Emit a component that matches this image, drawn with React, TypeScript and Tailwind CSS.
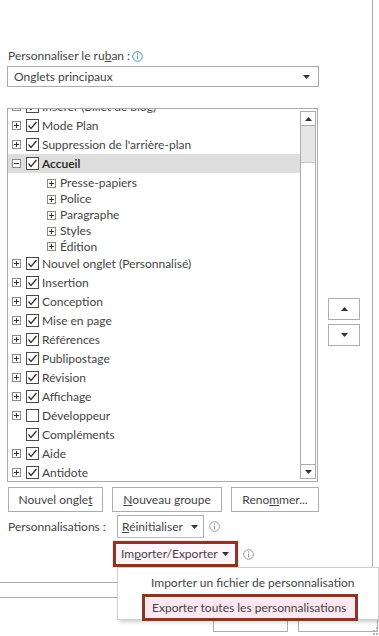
import React from 'react';

const font = { fontFamily: 'Lato, "Noto Sans", sans-serif' };

const Expander = ({ open = false }: { open?: boolean }) => (
    <svg width="9" height="9" viewBox="0 0 9 9" className="shrink-0">
        <rect x="0.5" y="0.5" width="8" height="8" fill="white" stroke="#8a8a8a" />
        <line x1="2" y1="4.5" x2="7" y2="4.5" stroke="#333" />
        {!open && <line x1="4.5" y1="2" x2="4.5" y2="7" stroke="#333" />}
    </svg>
);

const Check = ({ checked = true }: { checked?: boolean }) => (
    <svg width="13" height="13" viewBox="0 0 13 13" className="shrink-0">
        <rect x="0.5" y="0.5" width="12" height="12" fill="white" stroke="#4a4a4a" />
        {checked && <path d="M2.5 6.5 L5 9.5 L10.5 3" fill="none" stroke="#333" strokeWidth="1.3" />}
    </svg>
);

const Info = ({ blue = false }: { blue?: boolean }) => (
    <svg width="11" height="11" viewBox="0 0 11 11" className="shrink-0">
        <circle cx="5.5" cy="5.5" r="4.8" fill="none" stroke={blue ? '#4a8ad6' : '#9a9a9a'} />
        <line x1="5.5" y1="4.5" x2="5.5" y2="8.3" stroke={blue ? '#4a8ad6' : '#9a9a9a'} />
        <circle cx="5.5" cy="3" r="0.7" fill={blue ? '#4a8ad6' : '#9a9a9a'} />
    </svg>
);

const Caret = ({ up = false }: { up?: boolean }) => (
    <svg width="7" height="4" viewBox="0 0 7 4" className="shrink-0">
        <path d={up ? 'M0 4 L3.5 0 L7 4 Z' : 'M0 0 L7 0 L3.5 4 Z'} fill="#333" />
    </svg>
);

type Tab = { label: string; expander?: boolean; checked?: boolean };

const beforeTabs: Tab[] = [
    { label: 'Insérer (Billet de blog)' },
    { label: 'Mode Plan' },
    { label: "Suppression de l'arrière-plan" },
];

const groups = ['Presse-papiers', 'Police', 'Paragraphe', 'Styles', 'Édition'];

const afterTabs: Tab[] = [
    { label: 'Nouvel onglet (Personnalisé)' },
    { label: 'Insertion' },
    { label: 'Conception' },
    { label: 'Mise en page' },
    { label: 'Références' },
    { label: 'Publipostage' },
    { label: 'Révision' },
    { label: 'Affichage' },
    { label: 'Développeur', checked: false },
    { label: 'Compléments', expander: false },
    { label: 'Aide' },
    { label: 'Antidote' },
];

const TabRow = ({ tab }: { tab: Tab }) => (
    <div className="h-[19px] flex items-center pl-[4px]">
        <div className="w-[9px]">{tab.expander !== false && <Expander />}</div>
        <div className="ml-[5px]"><Check checked={tab.checked !== false} /></div>
        <span className="ml-[3px] whitespace-nowrap">{tab.label}</span>
    </div>
);

const Btn = ({ children, className = '' }: { children: React.ReactNode; className?: string }) => (
    <div className={`h-[25px] border border-[#adadad] bg-white flex items-center justify-center ${className}`}>
        {children}
    </div>
);

export default function App() {
    return (
        <div className="w-[379px] h-[636px] bg-white overflow-hidden relative text-[12px] text-[#444]" style={font}>
            <div className="w-[373px] h-[576px] border-r border-[#ababab] pl-[7px] pt-[48px]">
                <div className="h-[16px] flex items-center gap-[2px] pl-[1px]">
                    <span>Personnaliser le ru<u>b</u>an :</span>
                    <Info blue />
                </div>

                <div className="mt-[2px] w-[312px] h-[21px] border border-[#ababab] flex items-center justify-between pl-[6px] pr-[8px]">
                    <span>Onglets principaux</span>
                    <Caret />
                </div>

                <div className="mt-[21px] flex">
                    <div className="w-[311px] h-[374px] border border-[#ababab] flex">
                        <div className="flex-1 overflow-hidden">
                            <div className="-mt-[12px]">
                                {beforeTabs.map((t) => <TabRow key={t.label} tab={t} />)}
                                <div className="h-[19px] flex items-center pl-[4px] bg-[#dedede] text-[#222] font-semibold">
                                    <Expander open />
                                    <div className="ml-[5px]"><Check /></div>
                                    <span className="ml-[3px]">Accueil</span>
                                </div>
                                <div className="pt-[2px]">
                                    {groups.map((g, i) => (
                                        <div key={g} className={`${i === groups.length - 1 ? 'h-[15px]' : 'h-[16px]'} flex items-center pl-[39px]`}>
                                            <Expander />
                                            <span className="ml-[4px]">{g}</span>
                                        </div>
                                    ))}
                                </div>
                                {afterTabs.map((t) => <TabRow key={t.label} tab={t} />)}
                            </div>
                        </div>
                        <div className="w-[16px] my-[2px] mr-[1px] border border-[#ababab] flex flex-col">
                            <div className="h-[14px] border-b border-[#ababab] flex items-center justify-center"><Caret up /></div>
                            <div className="h-[37px] bg-[#e6e6e6] border-b border-[#c8c8c8]" />
                            <div className="flex-1" />
                            <div className="h-[14px] border-t border-[#ababab] flex items-center justify-center"><Caret /></div>
                        </div>
                    </div>
                    <div className="ml-[10px] pt-[190px] flex flex-col gap-[4px]">
                        <div className="w-[32px] h-[22px] border border-[#adadad] flex items-center justify-center"><Caret up /></div>
                        <div className="w-[32px] h-[22px] border border-[#adadad] flex items-center justify-center"><Caret /></div>
                    </div>
                </div>

                <div className="mt-[5px] flex pl-[1px] gap-[9px]">
                    <Btn className="w-[95px]">Nouvel ongle<u>t</u></Btn>
                    <Btn className="w-[110px]"><u>N</u>ouveau groupe</Btn>
                    <Btn className="w-[88px]">Reno<u>m</u>mer...</Btn>
                </div>

                <div className="mt-[3px] h-[23px] flex items-center pl-[1px]">
                    <span className="w-[109px]">Personnalisations :</span>
                    <div className="w-[87px] h-[23px] border border-[#adadad] border-b-[#e9a6c2] flex items-center justify-between pl-[4px] pr-[5px]">
                        <span><u>R</u>éinitialiser</span>
                        <Caret />
                    </div>
                    <div className="ml-[5px]"><Info /></div>
                </div>

                <div className="mt-[2px] flex items-center pl-[105px]">
                    <div className="p-[1px] bg-[#fbe1ee]">
                        <div className="w-[125px] h-[26px] border-[3px] border-[#8b3526] bg-[#fff5fa] flex items-center justify-between pl-[5px] pr-[6px]">
                            <span>Im<u>p</u>orter/Exporter</span>
                            <Caret />
                        </div>
                    </div>
                    <div className="ml-[4px]"><Info /></div>
                </div>
            </div>

            <div className="mt-[6px] border-t border-[#ababab]" />
            <div className="mt-[14px] border-t border-[#ababab]" />
            <div className="mt-[10px] flex pl-[213px] gap-[10px]">
                <div className="w-[75px] h-[24px] border border-[#adadad]" />
                <div className="w-[80px] h-[24px] border border-[#adadad]" />
            </div>

            <div className="absolute left-[117px] top-[567px] w-[262px] h-[53px] bg-white border border-[#cfcfcf] shadow-[2px_2px_4px_rgba(0,0,0,0.2)] pt-[6px]">
                <div className="h-[18px] flex items-center pl-[33px] whitespace-nowrap">Importer un fichier de personnalisation</div>
                <div className="mt-[2px] ml-[24px] w-[216px] h-[27px] border-[3px] border-[#8b3526] bg-[#fde8f2] flex items-center pl-[7px] whitespace-nowrap">
                    Exporter toutes les personnalisations
                </div>
            </div>

            <div className="absolute right-[1px] bottom-[1px] grid grid-cols-3 gap-[1px]">
                {[0, 1, 2, 3, 4, 5, 6, 7, 8].map((i) => (
                    <div key={i} className={`w-[2px] h-[2px] ${i === 2 || i >= 4 && i !== 6 ? 'bg-[#b5b5b5]' : ''}`} />
                ))}
            </div>
        </div>
    );
}
